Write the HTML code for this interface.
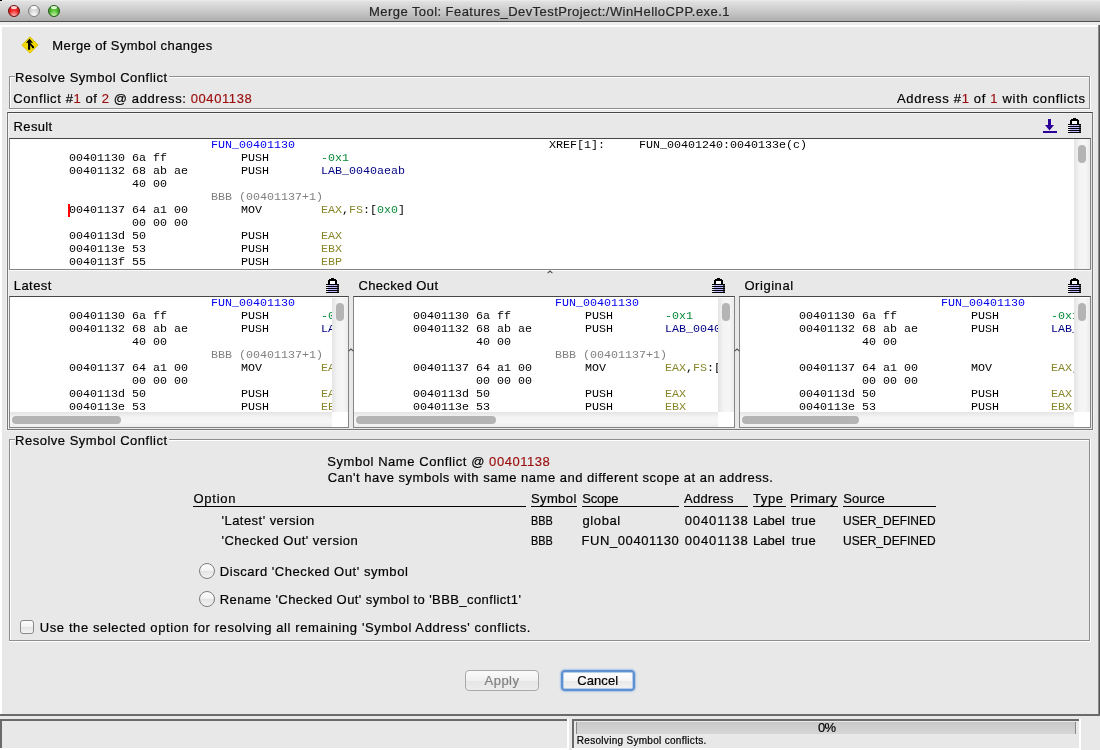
<!DOCTYPE html>
<html><head><meta charset="utf-8"><title>Merge Tool</title>
<style>
html,body{margin:0;padding:0;}
body{width:1100px;height:750px;overflow:hidden;background:#e8e8e8;position:relative;}
.r{position:absolute;}
.s{position:absolute;font-family:"Liberation Sans",sans-serif;white-space:pre;line-height:normal;-webkit-text-stroke:0.2px currentColor;}
.m{position:absolute;font-family:"Liberation Mono",monospace;font-size:11.67px;white-space:pre;line-height:normal;color:#000;}
</style></head><body><div id="w" style="position:absolute;left:0;top:0;width:1100px;height:750px;will-change:transform;">
<div class="r" style="left:0px;top:0px;width:1100px;height:21px;background:linear-gradient(#eeeeee 0,#e0e0e0 8%,#cbcbcb 50%,#aeaeae 100%);"></div>
<div class="r" style="left:0px;top:0px;width:2px;height:1px;background:#000;"></div>
<div class="r" style="left:0px;top:21px;width:1100px;height:1px;background:#505050;"></div>
<div class="r" style="left:0px;top:22px;width:1100px;height:3px;background:#ededed;"></div>
<div class="r" style="left:8px;top:5px;width:10px;height:10px;border-radius:50%;border:1px solid #6e1010;background:radial-gradient(ellipse 60% 45% at 50% 92%,#ffb4b4 0,rgba(255,120,120,0) 100%),radial-gradient(circle at 50% 50%,#ff3c3c 0,#e42020 55%,#a40e0e 100%);"></div>
<div class="r" style="left:11px;top:6px;width:6px;height:3px;border-radius:50%;background:rgba(255,235,235,0.9);"></div>
<div class="r" style="left:28px;top:5px;width:10px;height:10px;border-radius:50%;border:1px solid #7e7e7e;background:radial-gradient(ellipse 60% 45% at 50% 92%,#ffffff 0,rgba(255,255,255,0) 100%),radial-gradient(circle at 50% 50%,#e4e4e4 0,#d0d0d0 55%,#a8a8a8 100%);"></div>
<div class="r" style="left:31px;top:6px;width:6px;height:3px;border-radius:50%;background:rgba(255,255,255,0.95);"></div>
<div class="r" style="left:48px;top:5px;width:10px;height:10px;border-radius:50%;border:1px solid #245a18;background:radial-gradient(ellipse 60% 45% at 50% 92%,#c8f5a8 0,rgba(170,240,140,0) 100%),radial-gradient(circle at 50% 50%,#6cd24a 0,#48b02c 55%,#22701a 100%);"></div>
<div class="r" style="left:51px;top:6px;width:6px;height:3px;border-radius:50%;background:rgba(240,255,230,0.9);"></div>
<div class="s" style="left:369.00px;top:3.73px;font-size:13px;color:#262626;letter-spacing:0.444px;">Merge Tool: Features_DevTestProject:/WinHelloCPP.exe.1</div>
<div class="r" style="left:0px;top:25px;width:1100px;height:2px;background:#ffffff;"></div>
<div class="r" style="left:0px;top:25px;width:2px;height:690px;background:#ffffff;"></div>
<div class="r" style="left:1098px;top:25px;width:1px;height:690px;background:#8a8a8a;"></div>
<div class="r" style="left:1099px;top:25px;width:1px;height:690px;background:#555;"></div>
<div class="r" style="left:0px;top:714px;width:1100px;height:2px;background:#6a6a6a;"></div>
<svg class="r" style="left:21px;top:36px" width="18" height="18" viewBox="0 0 18 18">
<path d="M9 0.8 L17.2 9 L9 17.2 L0.8 9 Z" fill="#f0d800" stroke="#cdb800" stroke-width="0.8"/>
<path d="M8.5 2.8 L12 6.8 L9.2 6.8 L9.2 13.8 L7 13.8 L7 6.8 L5 6.8 Z" fill="#000"/>
<path d="M8.8 7.6 L12.2 11.2" stroke="#000" stroke-width="1.8" fill="none"/>
<path d="M10.8 11.4 L12.4 9.9 L13.2 11.6 L12 12.6 Z" fill="#000"/>
</svg>
<div class="s" style="left:52.30px;top:38.23px;font-size:13px;color:#000;letter-spacing:0.403px;">Merge of Symbol changes</div>
<div class="r" style="left:9px;top:76px;width:1080px;height:1px;background:#8e8e8e;"></div>
<div class="r" style="left:10px;top:77px;width:1079px;height:1px;background:#fff;"></div>
<div class="r" style="left:9px;top:76px;width:1px;height:32px;background:#8e8e8e;"></div>
<div class="r" style="left:10px;top:77px;width:1px;height:31px;background:#fff;"></div>
<div class="r" style="left:9px;top:108px;width:1081px;height:1px;background:#8e8e8e;"></div>
<div class="r" style="left:9px;top:109px;width:1082px;height:1px;background:#fff;"></div>
<div class="r" style="left:1089px;top:76px;width:1px;height:32px;background:#8e8e8e;"></div>
<div class="r" style="left:1090px;top:76px;width:1px;height:34px;background:#fff;"></div>
<div class="r" style="left:15px;top:70px;width:154px;height:12px;background:#e8e8e8;"></div>
<div class="s" style="left:15.00px;top:70.23px;font-size:13px;color:#000;letter-spacing:0.510px;">Resolve Symbol Conflict</div>
<div class="s" style="left:13.30px;top:91.23px;font-size:13px;color:#000;letter-spacing:0.598px;">Conflict #<span style="color:#9b0f0f">1</span> of <span style="color:#9b0f0f">2</span> @ address: <span style="color:#9b0f0f">00401138</span></div>
<div class="s" style="left:897.00px;top:91.23px;font-size:13px;color:#000;letter-spacing:0.677px;">Address #<span style="color:#9b0f0f">1</span> of <span style="color:#9b0f0f">1</span> with conflicts</div>
<div class="r" style="left:6px;top:111px;width:1088px;height:320px;border:1px solid #f2f2f2;box-sizing:border-box;"></div>
<div class="r" style="left:7px;top:112px;width:1086px;height:318px;border:1px solid #7a7a7a;border-top-color:#474747;box-sizing:border-box;box-shadow:inset 1px 1px 0 #f4f4f4;"></div>
<div class="r" style="left:8px;top:270px;width:1084px;height:1px;background:#fbfbfb;"></div>
<div class="s" style="left:13.60px;top:119.23px;font-size:13px;color:#000;letter-spacing:0.353px;">Result</div>
<svg class="r" style="left:1042px;top:118px" width="16" height="16" viewBox="0 0 16 16">
<path d="M6 1 H9 V7 H12 L7.5 12.6 L3 7 H6 Z" fill="#2a0098" stroke="#f4f4ea" stroke-width="0.6" paint-order="stroke"/>
<rect x="1" y="13" width="14" height="2" fill="#2a0098"/>
</svg>
<svg class="r" style="left:1068px;top:118px" width="13" height="15" shape-rendering="crispEdges"><rect x="5" y="0" width="3" height="1" fill="#000"/><rect x="3" y="1" width="7" height="1" fill="#000"/><rect x="2" y="2" width="9" height="1" fill="#000"/><rect x="2" y="3" width="2" height="1" fill="#000"/><rect x="4" y="3" width="5" height="1" fill="#fff"/><rect x="9" y="3" width="2" height="1" fill="#000"/><rect x="2" y="4" width="2" height="1" fill="#000"/><rect x="4" y="4" width="5" height="1" fill="#fff"/><rect x="9" y="4" width="2" height="1" fill="#000"/><rect x="2" y="5" width="2" height="1" fill="#000"/><rect x="4" y="5" width="5" height="1" fill="#fff"/><rect x="9" y="5" width="2" height="1" fill="#000"/><rect x="0" y="6" width="13" height="1" fill="#000"/><rect x="0" y="7" width="2" height="1" fill="#f4f4f4"/><rect x="2" y="7" width="9" height="1" fill="#b8b6fc"/><rect x="11" y="7" width="2" height="1" fill="#404040"/><rect x="0" y="8" width="13" height="1" fill="#000"/><rect x="0" y="9" width="2" height="1" fill="#f4f4f4"/><rect x="2" y="9" width="9" height="1" fill="#b8b6fc"/><rect x="11" y="9" width="2" height="1" fill="#404040"/><rect x="0" y="10" width="13" height="1" fill="#000"/><rect x="0" y="11" width="2" height="1" fill="#f4f4f4"/><rect x="2" y="11" width="9" height="1" fill="#b8b6fc"/><rect x="11" y="11" width="2" height="1" fill="#404040"/><rect x="0" y="12" width="13" height="1" fill="#000"/><rect x="0" y="13" width="2" height="1" fill="#f4f4f4"/><rect x="2" y="13" width="9" height="1" fill="#b8b6fc"/><rect x="11" y="13" width="2" height="1" fill="#404040"/><rect x="0" y="14" width="13" height="1" fill="#000"/></svg>
<div class="r" style="left:9px;top:138px;width:1082px;height:132px;border:1px solid #858585;border-top-color:#474747;box-sizing:border-box;background:#fff;"></div>
<div class="r" style="left:10px;top:139px;width:1080px;height:130px;overflow:hidden">
<div class="m" style="left:201px;top:-0.72px"><span style="color:#0000ee">FUN_00401130</span></div>
<div class="m" style="left:539px;top:-0.72px">XREF[1]:</div>
<div class="m" style="left:629px;top:-0.72px">FUN_00401240:0040133e(c)</div>
<div class="m" style="left:59px;top:12.28px">00401130 6a ff</div>
<div class="m" style="left:231px;top:12.28px">PUSH</div>
<div class="m" style="left:311px;top:12.28px"><span style="color:#0a8a3a">-0x1</span></div>
<div class="m" style="left:59px;top:25.28px">00401132 68 ab ae</div>
<div class="m" style="left:231px;top:25.28px">PUSH</div>
<div class="m" style="left:311px;top:25.28px"><span style="color:#000080">LAB_0040aeab</span></div>
<div class="m" style="left:122px;top:38.28px">40 00</div>
<div class="m" style="left:201px;top:51.28px"><span style="color:#808080">BBB (00401137+1)</span></div>
<div class="m" style="left:59px;top:64.28px">00401137 64 a1 00</div>
<div class="m" style="left:231px;top:64.28px">MOV</div>
<div class="m" style="left:311px;top:64.28px"><span style="color:#87872a">EAX</span>,<span style="color:#87872a">FS</span>:[<span style="color:#0a8a3a">0x0</span>]</div>
<div class="m" style="left:122px;top:77.28px">00 00 00</div>
<div class="m" style="left:59px;top:90.28px">0040113d 50</div>
<div class="m" style="left:231px;top:90.28px">PUSH</div>
<div class="m" style="left:311px;top:90.28px"><span style="color:#87872a">EAX</span></div>
<div class="m" style="left:59px;top:103.28px">0040113e 53</div>
<div class="m" style="left:231px;top:103.28px">PUSH</div>
<div class="m" style="left:311px;top:103.28px"><span style="color:#87872a">EBX</span></div>
<div class="m" style="left:59px;top:116.28px">0040113f 55</div>
<div class="m" style="left:231px;top:116.28px">PUSH</div>
<div class="m" style="left:311px;top:116.28px"><span style="color:#87872a">EBP</span></div>
<div class="r" style="left:58px;top:65px;width:2px;height:13px;background:#f00"></div>
</div>
<div class="r" style="left:1074px;top:139px;width:16px;height:130px;background:linear-gradient(90deg,#e4e4e4,#f4f4f4 35%,#f6f6f6 70%,#ececec);"></div>
<div class="r" style="left:1078px;top:145px;width:8px;height:18px;background:#b4b4b4;border-radius:4px;"></div>
<div class="s" style="left:13.80px;top:278.24px;font-size:13px;color:#000;letter-spacing:0.420px;">Latest</div>
<svg class="r" style="left:326px;top:278px" width="13" height="15" shape-rendering="crispEdges"><rect x="5" y="0" width="3" height="1" fill="#000"/><rect x="3" y="1" width="7" height="1" fill="#000"/><rect x="2" y="2" width="9" height="1" fill="#000"/><rect x="2" y="3" width="2" height="1" fill="#000"/><rect x="4" y="3" width="5" height="1" fill="#fff"/><rect x="9" y="3" width="2" height="1" fill="#000"/><rect x="2" y="4" width="2" height="1" fill="#000"/><rect x="4" y="4" width="5" height="1" fill="#fff"/><rect x="9" y="4" width="2" height="1" fill="#000"/><rect x="2" y="5" width="2" height="1" fill="#000"/><rect x="4" y="5" width="5" height="1" fill="#fff"/><rect x="9" y="5" width="2" height="1" fill="#000"/><rect x="0" y="6" width="13" height="1" fill="#000"/><rect x="0" y="7" width="2" height="1" fill="#f4f4f4"/><rect x="2" y="7" width="9" height="1" fill="#b8b6fc"/><rect x="11" y="7" width="2" height="1" fill="#404040"/><rect x="0" y="8" width="13" height="1" fill="#000"/><rect x="0" y="9" width="2" height="1" fill="#f4f4f4"/><rect x="2" y="9" width="9" height="1" fill="#b8b6fc"/><rect x="11" y="9" width="2" height="1" fill="#404040"/><rect x="0" y="10" width="13" height="1" fill="#000"/><rect x="0" y="11" width="2" height="1" fill="#f4f4f4"/><rect x="2" y="11" width="9" height="1" fill="#b8b6fc"/><rect x="11" y="11" width="2" height="1" fill="#404040"/><rect x="0" y="12" width="13" height="1" fill="#000"/><rect x="0" y="13" width="2" height="1" fill="#f4f4f4"/><rect x="2" y="13" width="9" height="1" fill="#b8b6fc"/><rect x="11" y="13" width="2" height="1" fill="#404040"/><rect x="0" y="14" width="13" height="1" fill="#000"/></svg>
<div class="s" style="left:358.40px;top:278.24px;font-size:13px;color:#000;letter-spacing:0.374px;">Checked Out</div>
<svg class="r" style="left:712px;top:278px" width="13" height="15" shape-rendering="crispEdges"><rect x="5" y="0" width="3" height="1" fill="#000"/><rect x="3" y="1" width="7" height="1" fill="#000"/><rect x="2" y="2" width="9" height="1" fill="#000"/><rect x="2" y="3" width="2" height="1" fill="#000"/><rect x="4" y="3" width="5" height="1" fill="#fff"/><rect x="9" y="3" width="2" height="1" fill="#000"/><rect x="2" y="4" width="2" height="1" fill="#000"/><rect x="4" y="4" width="5" height="1" fill="#fff"/><rect x="9" y="4" width="2" height="1" fill="#000"/><rect x="2" y="5" width="2" height="1" fill="#000"/><rect x="4" y="5" width="5" height="1" fill="#fff"/><rect x="9" y="5" width="2" height="1" fill="#000"/><rect x="0" y="6" width="13" height="1" fill="#000"/><rect x="0" y="7" width="2" height="1" fill="#f4f4f4"/><rect x="2" y="7" width="9" height="1" fill="#b8b6fc"/><rect x="11" y="7" width="2" height="1" fill="#404040"/><rect x="0" y="8" width="13" height="1" fill="#000"/><rect x="0" y="9" width="2" height="1" fill="#f4f4f4"/><rect x="2" y="9" width="9" height="1" fill="#b8b6fc"/><rect x="11" y="9" width="2" height="1" fill="#404040"/><rect x="0" y="10" width="13" height="1" fill="#000"/><rect x="0" y="11" width="2" height="1" fill="#f4f4f4"/><rect x="2" y="11" width="9" height="1" fill="#b8b6fc"/><rect x="11" y="11" width="2" height="1" fill="#404040"/><rect x="0" y="12" width="13" height="1" fill="#000"/><rect x="0" y="13" width="2" height="1" fill="#f4f4f4"/><rect x="2" y="13" width="9" height="1" fill="#b8b6fc"/><rect x="11" y="13" width="2" height="1" fill="#404040"/><rect x="0" y="14" width="13" height="1" fill="#000"/></svg>
<div class="s" style="left:744.40px;top:278.24px;font-size:13px;color:#000;letter-spacing:0.556px;">Original</div>
<svg class="r" style="left:1068px;top:278px" width="13" height="15" shape-rendering="crispEdges"><rect x="5" y="0" width="3" height="1" fill="#000"/><rect x="3" y="1" width="7" height="1" fill="#000"/><rect x="2" y="2" width="9" height="1" fill="#000"/><rect x="2" y="3" width="2" height="1" fill="#000"/><rect x="4" y="3" width="5" height="1" fill="#fff"/><rect x="9" y="3" width="2" height="1" fill="#000"/><rect x="2" y="4" width="2" height="1" fill="#000"/><rect x="4" y="4" width="5" height="1" fill="#fff"/><rect x="9" y="4" width="2" height="1" fill="#000"/><rect x="2" y="5" width="2" height="1" fill="#000"/><rect x="4" y="5" width="5" height="1" fill="#fff"/><rect x="9" y="5" width="2" height="1" fill="#000"/><rect x="0" y="6" width="13" height="1" fill="#000"/><rect x="0" y="7" width="2" height="1" fill="#f4f4f4"/><rect x="2" y="7" width="9" height="1" fill="#b8b6fc"/><rect x="11" y="7" width="2" height="1" fill="#404040"/><rect x="0" y="8" width="13" height="1" fill="#000"/><rect x="0" y="9" width="2" height="1" fill="#f4f4f4"/><rect x="2" y="9" width="9" height="1" fill="#b8b6fc"/><rect x="11" y="9" width="2" height="1" fill="#404040"/><rect x="0" y="10" width="13" height="1" fill="#000"/><rect x="0" y="11" width="2" height="1" fill="#f4f4f4"/><rect x="2" y="11" width="9" height="1" fill="#b8b6fc"/><rect x="11" y="11" width="2" height="1" fill="#404040"/><rect x="0" y="12" width="13" height="1" fill="#000"/><rect x="0" y="13" width="2" height="1" fill="#f4f4f4"/><rect x="2" y="13" width="9" height="1" fill="#b8b6fc"/><rect x="11" y="13" width="2" height="1" fill="#404040"/><rect x="0" y="14" width="13" height="1" fill="#000"/></svg>
<div class="r" style="left:9px;top:296px;width:340px;height:132px;border:1px solid #858585;border-top-color:#474747;box-sizing:border-box;background:#fff;"></div>
<div class="r" style="left:10px;top:297px;width:338px;height:130px;overflow:hidden">
<div class="m" style="left:201px;top:-0.72px"><span style="color:#0000ee">FUN_00401130</span></div>
<div class="m" style="left:59px;top:12.28px">00401130 6a ff</div>
<div class="m" style="left:231px;top:12.28px">PUSH</div>
<div class="m" style="left:311px;top:12.28px"><span style="color:#0a8a3a">-0x1</span></div>
<div class="m" style="left:59px;top:25.28px">00401132 68 ab ae</div>
<div class="m" style="left:231px;top:25.28px">PUSH</div>
<div class="m" style="left:311px;top:25.28px"><span style="color:#000080">LAB_0040aeab</span></div>
<div class="m" style="left:122px;top:38.28px">40 00</div>
<div class="m" style="left:201px;top:51.28px"><span style="color:#808080">BBB (00401137+1)</span></div>
<div class="m" style="left:59px;top:64.28px">00401137 64 a1 00</div>
<div class="m" style="left:231px;top:64.28px">MOV</div>
<div class="m" style="left:311px;top:64.28px"><span style="color:#87872a">EAX</span>,<span style="color:#87872a">FS</span>:[<span style="color:#0a8a3a">0x0</span>]</div>
<div class="m" style="left:122px;top:77.28px">00 00 00</div>
<div class="m" style="left:59px;top:90.28px">0040113d 50</div>
<div class="m" style="left:231px;top:90.28px">PUSH</div>
<div class="m" style="left:311px;top:90.28px"><span style="color:#87872a">EAX</span></div>
<div class="m" style="left:59px;top:103.28px">0040113e 53</div>
<div class="m" style="left:231px;top:103.28px">PUSH</div>
<div class="m" style="left:311px;top:103.28px"><span style="color:#87872a">EBX</span></div>
<div class="m" style="left:59px;top:116.28px">0040113f 55</div>
<div class="m" style="left:231px;top:116.28px">PUSH</div>
<div class="m" style="left:311px;top:116.28px"><span style="color:#87872a">EBP</span></div>
</div>
<div class="r" style="left:332px;top:298px;width:16px;height:114px;background:linear-gradient(90deg,#e4e4e4,#f4f4f4 35%,#f6f6f6 70%,#ececec);"></div>
<div class="r" style="left:336px;top:303px;width:8px;height:18px;background:#b4b4b4;border-radius:4px;"></div>
<div class="r" style="left:10px;top:412px;width:322px;height:15px;background:linear-gradient(#e4e4e4,#f4f4f4 35%,#f6f6f6 70%,#ececec);"></div>
<div class="r" style="left:12px;top:416px;width:109px;height:8px;background:#b4b4b4;border-radius:4px;"></div>
<div class="r" style="left:332px;top:412px;width:16px;height:15px;background:#fff;"></div>
<div class="r" style="left:353px;top:296px;width:382px;height:132px;border:1px solid #858585;border-top-color:#474747;box-sizing:border-box;background:#fff;"></div>
<div class="r" style="left:354px;top:297px;width:380px;height:130px;overflow:hidden">
<div class="m" style="left:201px;top:-0.72px"><span style="color:#0000ee">FUN_00401130</span></div>
<div class="m" style="left:59px;top:12.28px">00401130 6a ff</div>
<div class="m" style="left:231px;top:12.28px">PUSH</div>
<div class="m" style="left:311px;top:12.28px"><span style="color:#0a8a3a">-0x1</span></div>
<div class="m" style="left:59px;top:25.28px">00401132 68 ab ae</div>
<div class="m" style="left:231px;top:25.28px">PUSH</div>
<div class="m" style="left:311px;top:25.28px"><span style="color:#000080">LAB_0040aeab</span></div>
<div class="m" style="left:122px;top:38.28px">40 00</div>
<div class="m" style="left:201px;top:51.28px"><span style="color:#808080">BBB (00401137+1)</span></div>
<div class="m" style="left:59px;top:64.28px">00401137 64 a1 00</div>
<div class="m" style="left:231px;top:64.28px">MOV</div>
<div class="m" style="left:311px;top:64.28px"><span style="color:#87872a">EAX</span>,<span style="color:#87872a">FS</span>:[<span style="color:#0a8a3a">0x0</span>]</div>
<div class="m" style="left:122px;top:77.28px">00 00 00</div>
<div class="m" style="left:59px;top:90.28px">0040113d 50</div>
<div class="m" style="left:231px;top:90.28px">PUSH</div>
<div class="m" style="left:311px;top:90.28px"><span style="color:#87872a">EAX</span></div>
<div class="m" style="left:59px;top:103.28px">0040113e 53</div>
<div class="m" style="left:231px;top:103.28px">PUSH</div>
<div class="m" style="left:311px;top:103.28px"><span style="color:#87872a">EBX</span></div>
<div class="m" style="left:59px;top:116.28px">0040113f 55</div>
<div class="m" style="left:231px;top:116.28px">PUSH</div>
<div class="m" style="left:311px;top:116.28px"><span style="color:#87872a">EBP</span></div>
</div>
<div class="r" style="left:718px;top:298px;width:16px;height:114px;background:linear-gradient(90deg,#e4e4e4,#f4f4f4 35%,#f6f6f6 70%,#ececec);"></div>
<div class="r" style="left:722px;top:303px;width:8px;height:18px;background:#b4b4b4;border-radius:4px;"></div>
<div class="r" style="left:354px;top:412px;width:364px;height:15px;background:linear-gradient(#e4e4e4,#f4f4f4 35%,#f6f6f6 70%,#ececec);"></div>
<div class="r" style="left:356px;top:416px;width:140px;height:8px;background:#b4b4b4;border-radius:4px;"></div>
<div class="r" style="left:718px;top:412px;width:16px;height:15px;background:#fff;"></div>
<div class="r" style="left:739px;top:296px;width:352px;height:132px;border:1px solid #858585;border-top-color:#474747;box-sizing:border-box;background:#fff;"></div>
<div class="r" style="left:740px;top:297px;width:350px;height:130px;overflow:hidden">
<div class="m" style="left:201px;top:-0.72px"><span style="color:#0000ee">FUN_00401130</span></div>
<div class="m" style="left:59px;top:12.28px">00401130 6a ff</div>
<div class="m" style="left:231px;top:12.28px">PUSH</div>
<div class="m" style="left:311px;top:12.28px"><span style="color:#0a8a3a">-0x1</span></div>
<div class="m" style="left:59px;top:25.28px">00401132 68 ab ae</div>
<div class="m" style="left:231px;top:25.28px">PUSH</div>
<div class="m" style="left:311px;top:25.28px"><span style="color:#000080">LAB_0040aeab</span></div>
<div class="m" style="left:122px;top:38.28px">40 00</div>
<div class="m" style="left:59px;top:64.28px">00401137 64 a1 00</div>
<div class="m" style="left:231px;top:64.28px">MOV</div>
<div class="m" style="left:311px;top:64.28px"><span style="color:#87872a">EAX</span>,<span style="color:#87872a">FS</span>:[<span style="color:#0a8a3a">0x0</span>]</div>
<div class="m" style="left:122px;top:77.28px">00 00 00</div>
<div class="m" style="left:59px;top:90.28px">0040113d 50</div>
<div class="m" style="left:231px;top:90.28px">PUSH</div>
<div class="m" style="left:311px;top:90.28px"><span style="color:#87872a">EAX</span></div>
<div class="m" style="left:59px;top:103.28px">0040113e 53</div>
<div class="m" style="left:231px;top:103.28px">PUSH</div>
<div class="m" style="left:311px;top:103.28px"><span style="color:#87872a">EBX</span></div>
<div class="m" style="left:59px;top:116.28px">0040113f 55</div>
<div class="m" style="left:231px;top:116.28px">PUSH</div>
<div class="m" style="left:311px;top:116.28px"><span style="color:#87872a">EBP</span></div>
</div>
<div class="r" style="left:1074px;top:298px;width:16px;height:114px;background:linear-gradient(90deg,#e4e4e4,#f4f4f4 35%,#f6f6f6 70%,#ececec);"></div>
<div class="r" style="left:1078px;top:303px;width:8px;height:18px;background:#b4b4b4;border-radius:4px;"></div>
<div class="r" style="left:740px;top:412px;width:334px;height:15px;background:linear-gradient(#e4e4e4,#f4f4f4 35%,#f6f6f6 70%,#ececec);"></div>
<div class="r" style="left:742px;top:416px;width:117px;height:8px;background:#b4b4b4;border-radius:4px;"></div>
<div class="r" style="left:1074px;top:412px;width:16px;height:15px;background:#fff;"></div>
<svg class="r" style="left:547px;top:270px" width="6" height="4" viewBox="0 0 6 4"><path d="M0.6 3.2 L3 1 L5.4 3.2" fill="none" stroke="#505050" stroke-width="1.1"/></svg>
<svg class="r" style="left:348px;top:348px" width="6" height="4" viewBox="0 0 6 4"><path d="M0.6 3.2 L3 1 L5.4 3.2" fill="none" stroke="#505050" stroke-width="1.1"/></svg>
<svg class="r" style="left:734px;top:348px" width="6" height="4" viewBox="0 0 6 4"><path d="M0.6 3.2 L3 1 L5.4 3.2" fill="none" stroke="#505050" stroke-width="1.1"/></svg>
<div class="r" style="left:9px;top:439px;width:1080px;height:1px;background:#8e8e8e;"></div>
<div class="r" style="left:10px;top:440px;width:1079px;height:1px;background:#fff;"></div>
<div class="r" style="left:9px;top:439px;width:1px;height:201px;background:#8e8e8e;"></div>
<div class="r" style="left:10px;top:440px;width:1px;height:200px;background:#fff;"></div>
<div class="r" style="left:9px;top:640px;width:1081px;height:1px;background:#8e8e8e;"></div>
<div class="r" style="left:9px;top:641px;width:1082px;height:1px;background:#fff;"></div>
<div class="r" style="left:1089px;top:439px;width:1px;height:201px;background:#8e8e8e;"></div>
<div class="r" style="left:1090px;top:439px;width:1px;height:203px;background:#fff;"></div>
<div class="r" style="left:15px;top:433px;width:154px;height:12px;background:#e8e8e8;"></div>
<div class="s" style="left:15.00px;top:433.24px;font-size:13px;color:#000;letter-spacing:0.510px;">Resolve Symbol Conflict</div>
<div class="s" style="left:327.30px;top:454.24px;font-size:13px;color:#000;letter-spacing:0.555px;">Symbol Name Conflict @ <span style="color:#9b0f0f">00401138</span></div>
<div class="s" style="left:327.70px;top:470.24px;font-size:13px;color:#000;letter-spacing:0.505px;">Can't have symbols with same name and different scope at an address.</div>
<div class="s" style="left:193.40px;top:491.24px;font-size:13px;color:#000;letter-spacing:0.766px;">Option</div>
<div class="r" style="left:193px;top:506px;width:333px;height:1px;background:#000;"></div>
<div class="s" style="left:530.90px;top:491.24px;font-size:13px;color:#000;letter-spacing:0.408px;">Symbol</div>
<div class="r" style="left:531px;top:506px;width:46px;height:1px;background:#000;"></div>
<div class="s" style="left:582.20px;top:491.24px;font-size:13px;color:#000;letter-spacing:-0.158px;">Scope</div>
<div class="r" style="left:582px;top:506px;width:97px;height:1px;background:#000;"></div>
<div class="s" style="left:684.00px;top:491.24px;font-size:13px;color:#000;letter-spacing:0.285px;">Address</div>
<div class="r" style="left:684px;top:506px;width:64px;height:1px;background:#000;"></div>
<div class="s" style="left:753.00px;top:491.24px;font-size:13px;color:#000;letter-spacing:0.615px;">Type</div>
<div class="r" style="left:753px;top:506px;width:33px;height:1px;background:#000;"></div>
<div class="s" style="left:790.10px;top:491.24px;font-size:13px;color:#000;letter-spacing:0.304px;">Primary</div>
<div class="r" style="left:791px;top:506px;width:47px;height:1px;background:#000;"></div>
<div class="s" style="left:843.30px;top:491.24px;font-size:13px;color:#000;letter-spacing:0.048px;">Source</div>
<div class="r" style="left:843px;top:506px;width:93px;height:1px;background:#000;"></div>
<div class="s" style="left:221.50px;top:513.24px;font-size:13px;color:#000;letter-spacing:0.462px;">'Latest' version</div>
<div class="s" style="left:530.66px;top:513.24px;font-size:13px;color:#000;transform:scaleX(0.8381);transform-origin:0 0;">BBB</div>
<div class="s" style="left:582.50px;top:513.24px;font-size:13px;color:#000;letter-spacing:0.598px;">global</div>
<div class="s" style="left:684.70px;top:513.24px;font-size:13px;color:#000;letter-spacing:0.894px;">00401138</div>
<div class="s" style="left:752.90px;top:513.24px;font-size:13px;color:#000;letter-spacing:0.045px;">Label</div>
<div class="s" style="left:791.70px;top:513.24px;font-size:13px;color:#000;letter-spacing:0.576px;">true</div>
<div class="s" style="left:842.68px;top:513.24px;font-size:13px;color:#000;transform:scaleX(0.9231);transform-origin:0 0;">USER_DEFINED</div>
<div class="s" style="left:221.50px;top:533.24px;font-size:13px;color:#000;letter-spacing:0.494px;">'Checked Out' version</div>
<div class="s" style="left:530.66px;top:533.24px;font-size:13px;color:#000;transform:scaleX(0.8381);transform-origin:0 0;">BBB</div>
<div class="s" style="left:581.50px;top:533.24px;font-size:13px;color:#000;letter-spacing:0.583px;">FUN_00401130</div>
<div class="s" style="left:684.70px;top:533.24px;font-size:13px;color:#000;letter-spacing:0.894px;">00401138</div>
<div class="s" style="left:752.90px;top:533.24px;font-size:13px;color:#000;letter-spacing:0.045px;">Label</div>
<div class="s" style="left:791.70px;top:533.24px;font-size:13px;color:#000;letter-spacing:0.576px;">true</div>
<div class="s" style="left:842.68px;top:533.24px;font-size:13px;color:#000;transform:scaleX(0.9231);transform-origin:0 0;">USER_DEFINED</div>
<div class="r" style="left:199px;top:563px;width:14px;height:14px;border-radius:50%;border:1px solid #7c7c7c;background:linear-gradient(#fdfdfd,#f2f2f2 50%,#e4e4e4 52%,#f4f4f4);"></div>
<div class="s" style="left:219.80px;top:564.24px;font-size:13px;color:#000;letter-spacing:0.544px;">Discard 'Checked Out' symbol</div>
<div class="r" style="left:199px;top:591px;width:14px;height:14px;border-radius:50%;border:1px solid #7c7c7c;background:linear-gradient(#fdfdfd,#f2f2f2 50%,#e4e4e4 52%,#f4f4f4);"></div>
<div class="s" style="left:219.80px;top:592.24px;font-size:13px;color:#000;letter-spacing:0.417px;">Rename 'Checked Out' symbol to 'BBB_conflict1'</div>
<div class="r" style="left:20px;top:620px;width:12px;height:12px;border-radius:3px;border:1px solid #8a8a8a;background:linear-gradient(#fdfdfd,#f2f2f2 50%,#e4e4e4 52%,#f4f4f4);"></div>
<div class="s" style="left:39.80px;top:620.24px;font-size:13px;color:#000;letter-spacing:0.594px;">Use the selected option for resolving all remaining 'Symbol Address' conflicts.</div>
<div class="r" style="left:465px;top:670px;width:72px;height:19px;border:1px solid #a9a9a9;border-radius:4px;background:linear-gradient(#fbfbfb,#f0f0f0 50%,#e6e6e6 52%,#ececec);"></div>
<div class="s" style="left:484.50px;top:673.24px;font-size:13px;color:#7f7f7f;letter-spacing:0.495px;">Apply</div>
<div class="r" style="left:561px;top:670px;width:70px;height:17px;border:2px solid #5f90d0;border-radius:4px;background:linear-gradient(#ffffff,#f6f6f6 50%,#e9e9e9 52%,#f2f2f2);box-shadow:inset 0 0 0 1px #b4cdec,0 0 1.5px 1px rgba(140,180,230,0.7);"></div>
<div class="s" style="left:577.30px;top:673.24px;font-size:13px;color:#000;letter-spacing:0.064px;">Cancel</div>
<div class="r" style="left:0px;top:719px;width:569px;height:2px;background:#6a6a6a;"></div>
<div class="r" style="left:0px;top:719px;width:2px;height:30px;background:#6a6a6a;"></div>
<div class="r" style="left:567px;top:719px;width:2px;height:30px;background:#fff;"></div>
<div class="r" style="left:0px;top:748px;width:569px;height:2px;background:#fff;"></div>
<div class="r" style="left:572px;top:719px;width:509px;height:2px;background:#6a6a6a;"></div>
<div class="r" style="left:572px;top:719px;width:2px;height:30px;background:#6a6a6a;"></div>
<div class="r" style="left:1079px;top:719px;width:2px;height:30px;background:#fff;"></div>
<div class="r" style="left:572px;top:748px;width:509px;height:2px;background:#fff;"></div>
<div class="r" style="left:576px;top:722px;width:500px;height:12px;background:linear-gradient(#c9c9c9,#d6d6d6);border-left:1px solid #888;border-right:1px solid #888;box-sizing:border-box;"></div>
<div class="s" style="left:576px;width:500px;text-align:center;top:720.24px;font-size:13px;letter-spacing:-0.6px;text-indent:1.5px">0%</div>
<div class="s" style="left:576.80px;top:734.95px;font-size:10px;color:#000;letter-spacing:0.299px;">Resolving Symbol conflicts.</div>
</div></body></html>
